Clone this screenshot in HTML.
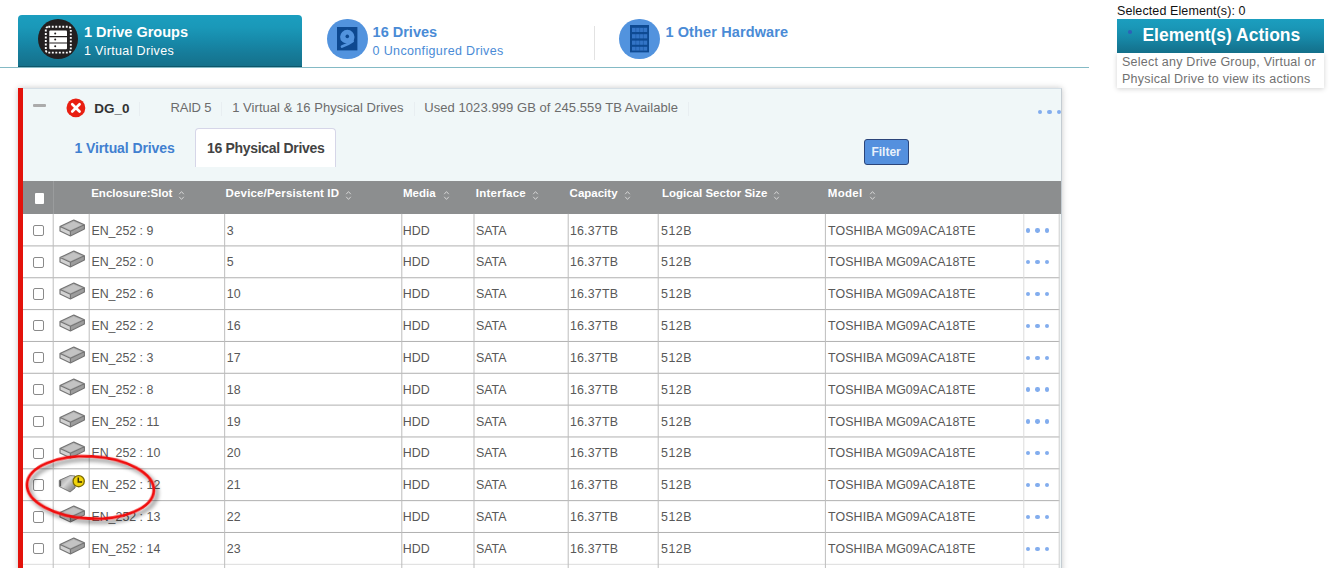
<!DOCTYPE html>
<html><head><meta charset="utf-8"><title>Drive Groups</title>
<style>
*{box-sizing:border-box;margin:0;padding:0}
html,body{width:1341px;height:568px;overflow:hidden;background:#fff;font-family:"Liberation Sans",sans-serif;}
body{position:relative}
.abs{position:absolute}
/* top tabs */
#tab1{left:18px;top:15.4px;width:284.3px;height:51.4px;border-radius:4px 4px 0 0;background:linear-gradient(#1b9ebf 0%,#1a98b8 25%,#178aaa 50%,#167c9a 75%,#15718b 100%);border-bottom:1.5px solid #0e566a}
.circ{width:40.6px;height:40.6px;border-radius:50%}
#c1{left:37.5px;top:18.5px;background:#231f20}
#c2{left:327px;top:18.5px;background:#5293de}
#c3{left:619.4px;top:18.5px;background:#5293de}
.t1{font-weight:bold;font-size:14.5px;line-height:16px;white-space:nowrap}
.t2{font-size:12.5px;line-height:14px;white-space:nowrap;letter-spacing:.35px}
.blue{color:#4a8bd6}
#hline{left:0;top:66.5px;width:1089px;height:1.6px;background:#84bac5}
#vsep{left:594px;top:26px;width:1px;height:34px;background:#e2e2e2}
/* right */
#sel{left:1117px;top:4px;font-size:12.5px;letter-spacing:.1px;line-height:14px;color:#111;white-space:nowrap}
#acth{left:1117px;top:19px;width:206.5px;height:34.4px;background:linear-gradient(#1b9ebf 0%,#1a97b7 25%,#1789a8 55%,#157a97 80%,#13708a 100%);color:#fff;font-weight:bold;font-size:17.5px;line-height:34px;white-space:nowrap}
#actb{left:1117px;top:53.4px;width:206.5px;height:34.2px;background:#fff;box-shadow:0 1px 5px rgba(0,0,0,.18);font-size:12.5px;letter-spacing:.23px;line-height:17.4px;color:#717171;padding:.6px 0 0 5px;white-space:nowrap}
/* panel */
#panel{left:18px;top:88px;width:1043.6px;height:500px;background:#f0f7f8;border-top:1px solid #d5dfe6;border-right:1.4px solid #c4ccd2;box-shadow:0 0 6px rgba(0,0,0,.22)}
#redbar{left:18px;top:88px;width:5px;height:500px;background:#e3120b}
.hd{font-size:13px;line-height:16px;white-space:nowrap;color:#6c6c6c}
.sepv{width:1px;height:14px;background:#e8eef1;top:101.6px}
#vt{letter-spacing:-.1px;left:74.5px;top:140px;font-size:14px;font-weight:bold;color:#4180d0;white-space:nowrap;line-height:17px}
#pt{letter-spacing:-.3px;left:195.3px;top:128.2px;width:140.8px;height:38.5px;background:#fff;border:1.4px solid #d6d6e8;border-bottom:none;border-radius:4px 4px 0 0;font-size:14px;font-weight:bold;color:#434343;line-height:17px;padding:10.4px 0 0 10.6px;white-space:nowrap}
#filter{left:863.6px;top:138.8px;width:45px;height:26.4px;background:#5490de;border:1px solid #2b457a;border-radius:3px;color:#e9f1fb;font-size:12px;font-weight:bold;line-height:24px;text-align:center}
/* table */
#thead{left:23px;top:181px;width:1037.6px;height:32.8px;background:#8c8e8f}
.th{position:absolute;top:5px;color:#fff;font-weight:bold;font-size:11.5px;line-height:14px;white-space:nowrap}
.srt{position:absolute;top:9px;line-height:0}
.srt svg{display:block}
#hcb{left:34.5px;top:193px;width:9.3px;height:10.5px;background:#fff;border-radius:1px}
#hsep{left:53px;top:181px;width:1px;height:32.6px;background:#9a9c9d}
#tbody{left:23px;top:0;width:1036.4px;height:568px;}
#tbg{left:23px;top:213.6px;width:1036.4px;height:360px;background:#fff}
.row{position:absolute;left:23px;width:1036.4px;height:31.84px;font-size:12.4px;color:#585858;}
.c{position:absolute;top:0;height:100%;border-left:1px solid transparent;line-height:32.6px;white-space:nowrap;padding-left:1.4px;overflow:hidden}
.c0{left:0;width:30px;border-left:none}
.c1{left:30px;width:36px}
.c2{left:66px;width:135.4px}
.c3{left:201.4px;width:177.4px}
.c4{left:378.3px;width:72.9px;padding-left:.5px}
.c5{left:451.2px;width:94.2px;padding-left:.8px}
.c6{left:545.4px;width:90.2px;padding-left:.5px;letter-spacing:.2px}
.c7{left:634.9px;width:167.5px;padding-left:2px;letter-spacing:.6px}
.c8{left:802.4px;width:198.4px;padding-left:1.7px;letter-spacing:.09px}
.c9{left:1000.8px;width:35.6px}
.cb{position:absolute;left:10.2px;top:10.2px;width:11.2px;height:11.2px;border:1px solid #8a8a8a;border-radius:2px;background:#fff}
.drv{position:absolute;left:3.8px;top:4px}
.dots{position:absolute;left:1.4px;top:13.7px;width:24px;height:5px}
.dots i{position:absolute;top:0;width:4.3px;height:4.3px;border-radius:50%;background:#82adee}
.dots i:nth-child(1){left:0}.dots i:nth-child(2){left:9.3px}.dots i:nth-child(3){left:18.6px}
#wrap{position:absolute;left:-20px;top:-20px;width:1381px;height:608px;background:#fff}
#in{position:absolute;left:20px;top:20px;width:1341px;height:568px}
</style></head><body><div id="wrap"><div id="in">
<div class="abs" id="hline"></div>
<div class="abs" id="tab1"></div>
<div class="abs circ" id="c1"></div>
<svg class="abs" style="left:44px;top:24.6px" width="28" height="29" viewBox="0 0 28 29"><rect x="1.8" y="1.8" width="25" height="25.8" rx="2.5" fill="none" stroke="#fff" stroke-width="1.9" stroke-dasharray="1.9 1.6"/><rect x="5.3" y="5.5" width="17.7" height="18.8" rx="1" fill="#fff"/><path d="M5.3 11.7 H23 M5.3 18 H23" stroke="#231f20" stroke-width="1.2"/><circle cx="11.2" cy="8.4" r="1" fill="#231f20"/><circle cx="11.2" cy="14.6" r="1" fill="#231f20"/><circle cx="11.2" cy="21.2" r="1" fill="#231f20"/></svg>
<div class="abs t1" style="left:84px;top:24px;color:#fff">1 Drive Groups</div>
<div class="abs t2" style="left:84px;top:43.9px;color:#fff">1 Virtual Drives</div>

<div class="abs circ" id="c2"></div>
<svg class="abs" style="left:337.2px;top:27.4px" width="20.4" height="23.4" viewBox="0 0 20.4 23.4"><rect width="20.4" height="23.4" fill="#0d4890"/><circle cx="10.3" cy="10" r="7.2" fill="#5293de"/><path d="M3.6 14.2 Q8 18.4 12.6 16.2" fill="none" stroke="#0d4890" stroke-width="1.5"/><path d="M15.6 14.2 Q11 17.6 5 19.6" fill="none" stroke="#5293de" stroke-width="2.7" stroke-linecap="round"/><circle cx="10.3" cy="9.4" r="1.8" fill="#0d4890"/></svg>
<div class="abs t1 blue" style="left:372.6px;top:24px">16 Drives</div>
<div class="abs t2 blue" style="left:372.6px;top:43.9px">0 Unconfigured Drives</div>
<div class="abs" id="vsep"></div>
<div class="abs circ" id="c3"></div>
<svg class="abs" style="left:630.2px;top:25.4px" width="19.2" height="27.4" viewBox="0 0 19.2 27.4"><rect width="19.2" height="27.4" fill="#0e4a92"/><g fill="#3374c6"><rect x="2" y="2.8" width="15.2" height="4.2"/><rect x="2" y="9.2" width="15.2" height="4.2"/><rect x="2" y="15.6" width="15.2" height="4.2"/><rect x="2" y="21.8" width="15.2" height="3.8"/></g><path d="M5.8 2.8V25.6M9.6 2.8V25.6M13.4 2.8V25.6" stroke="#0e4a92" stroke-width=".7" opacity=".6"/></svg>
<div class="abs t1 blue" style="left:665.4px;top:24px;letter-spacing:.12px">1 Other Hardware</div>

<div class="abs" id="sel">Selected Element(s): 0</div>
<div class="abs" id="actb">Select any Drive Group, Virtual or<br>Physical Drive to view its actions</div>
<div class="abs" id="acth"><span class="abs" style="left:11px;top:11.4px;width:3.6px;height:3.6px;border-radius:50%;background:#2d62b8"></span><span class="abs" style="left:25.4px;top:-1px">Element(s) Actions</span></div>

<div class="abs" id="panel"></div>
<div class="abs" id="redbar"></div>
<div class="abs" style="left:33px;top:104px;width:13px;height:2.6px;background:#ababab;border-radius:1px"></div>
<svg class="abs" style="left:65.8px;top:98.1px" width="19.8" height="19.8" viewBox="0 0 20 20"><circle cx="10" cy="10" r="9.5" fill="#e81f12"/><path d="M6.3 6.3 L13.7 13.7 M13.7 6.3 L6.3 13.7" stroke="#fff" stroke-width="2.7" stroke-linecap="round"/></svg>
<div class="abs hd" style="left:94.2px;top:101px;font-weight:bold;color:#333;font-size:13.5px">DG_0</div>
<div class="abs sepv" style="left:139.4px"></div>
<div class="abs hd" style="left:170.4px;top:100.3px;letter-spacing:-.15px">RAID 5</div>
<div class="abs sepv" style="left:220.6px"></div>
<div class="abs hd" style="left:232.2px;top:100.3px;letter-spacing:.04px">1 Virtual &amp; 16 Physical Drives</div>
<div class="abs sepv" style="left:413.6px"></div>
<div class="abs hd" style="left:424.2px;top:100.3px;letter-spacing:.07px">Used 1023.999 GB of 245.559 TB Available</div>
<div class="abs sepv" style="left:688px"></div>
<b class="dots abs" style="left:1038px;top:109.6px;width:23.4px;overflow:hidden"><i></i><i></i><i></i></b>
<div class="abs" id="vt">1 Virtual Drives</div>
<div class="abs" id="pt">16 Physical Drives</div>
<div class="abs" id="filter">Filter</div>

<div class="abs" id="tbg"></div>
<div class="abs" id="thead">
<span class="th" style="left:68.2px">Enclosure:Slot</span><span class="srt" style="left:154.9px"><svg viewBox="0 0 7 11" width="7" height="11"><path d="M1.2 4.2 L3.5 1.6 L5.8 4.2 M1.2 6.8 L3.5 9.4 L5.8 6.8" fill="none" stroke="#d4d4d4" stroke-width="1"/></svg></span>
<span class="th" style="left:202.6px;letter-spacing:.15px">Device/Persistent ID</span><span class="srt" style="left:322.4px"><svg viewBox="0 0 7 11" width="7" height="11"><path d="M1.2 4.2 L3.5 1.6 L5.8 4.2 M1.2 6.8 L3.5 9.4 L5.8 6.8" fill="none" stroke="#d4d4d4" stroke-width="1"/></svg></span>
<span class="th" style="left:380px">Media</span><span class="srt" style="left:420.0px"><svg viewBox="0 0 7 11" width="7" height="11"><path d="M1.2 4.2 L3.5 1.6 L5.8 4.2 M1.2 6.8 L3.5 9.4 L5.8 6.8" fill="none" stroke="#d4d4d4" stroke-width="1"/></svg></span>
<span class="th" style="left:452.8px;letter-spacing:.25px">Interface</span><span class="srt" style="left:508.8px"><svg viewBox="0 0 7 11" width="7" height="11"><path d="M1.2 4.2 L3.5 1.6 L5.8 4.2 M1.2 6.8 L3.5 9.4 L5.8 6.8" fill="none" stroke="#d4d4d4" stroke-width="1"/></svg></span>
<span class="th" style="left:546.6px">Capacity</span><span class="srt" style="left:601.2px"><svg viewBox="0 0 7 11" width="7" height="11"><path d="M1.2 4.2 L3.5 1.6 L5.8 4.2 M1.2 6.8 L3.5 9.4 L5.8 6.8" fill="none" stroke="#d4d4d4" stroke-width="1"/></svg></span>
<span class="th" style="left:639px">Logical Sector Size</span><span class="srt" style="left:749.7px"><svg viewBox="0 0 7 11" width="7" height="11"><path d="M1.2 4.2 L3.5 1.6 L5.8 4.2 M1.2 6.8 L3.5 9.4 L5.8 6.8" fill="none" stroke="#d4d4d4" stroke-width="1"/></svg></span>
<span class="th" style="left:804.8px;letter-spacing:.3px">Model</span><span class="srt" style="left:845.5px"><svg viewBox="0 0 7 11" width="7" height="11"><path d="M1.2 4.2 L3.5 1.6 L5.8 4.2 M1.2 6.8 L3.5 9.4 L5.8 6.8" fill="none" stroke="#d4d4d4" stroke-width="1"/></svg></span>
</div>
<div class="abs" id="hsep"></div>
<div class="abs" id="hcb"></div>
<svg class="abs" style="left:0;top:0" width="1341" height="568" viewBox="0 0 1341 568"><path d="M23 245.92H1059.6" stroke="#b0b0b0" stroke-width="1"/><path d="M23 277.76H1059.6" stroke="#b0b0b0" stroke-width="1"/><path d="M23 309.60H1059.6" stroke="#b0b0b0" stroke-width="1"/><path d="M23 341.44H1059.6" stroke="#b0b0b0" stroke-width="1"/><path d="M23 373.28H1059.6" stroke="#b0b0b0" stroke-width="1"/><path d="M23 405.12H1059.6" stroke="#b0b0b0" stroke-width="1"/><path d="M23 436.96H1059.6" stroke="#b0b0b0" stroke-width="1"/><path d="M23 468.80H1059.6" stroke="#b0b0b0" stroke-width="1"/><path d="M23 500.64H1059.6" stroke="#b0b0b0" stroke-width="1"/><path d="M23 532.48H1059.6" stroke="#b0b0b0" stroke-width="1"/><path d="M23 564.32H1059.6" stroke="#dcdcdc" stroke-width="1"/><path d="M53.20 213.8V568" stroke="#bdbdbd" stroke-width="1"/><path d="M89.20 213.8V568" stroke="#bdbdbd" stroke-width="1"/><path d="M224.66 213.8V568" stroke="#bdbdbd" stroke-width="1"/><path d="M401.80 213.8V568" stroke="#bdbdbd" stroke-width="1"/><path d="M474.00 213.8V568" stroke="#bdbdbd" stroke-width="1"/><path d="M568.20 213.8V568" stroke="#bdbdbd" stroke-width="1"/><path d="M658.20 213.8V568" stroke="#bdbdbd" stroke-width="1"/><path d="M825.40 213.8V568" stroke="#bdbdbd" stroke-width="1"/><path d="M1023.8 213.8V568" stroke="#dcdcdc" stroke-width="1"/><path d="M1059.2 213.8V568" stroke="#cfcfcf" stroke-width="1"/></svg>
<div class="row" style="top:214.58px"><span class="c c0"><i class="cb"></i></span><span class="c c1"><svg class="drv" viewBox="0 0 28 20" width="28" height="20"><polygon points="2,7.6 12.4,12.3 12.4,17 2,12.1" fill="#d2d2d2"/><polygon points="12.4,12.3 26.4,5.7 26.4,10.1 12.4,17" fill="#9c9c9c"/><polygon points="2,7.6 15.8,1.1 26.4,5.7 12.4,12.3" fill="#b4b4b4"/><polygon points="5.4,7.5 15.7,2.7 23.2,5.9 12.5,10.9" fill="#c3c3c3"/><path d="M2 7.6 L15.8 1.1 L26.4 5.7 V10.1 L12.4 17 L2 12.1 Z M2 7.6 L12.4 12.3 L26.4 5.7 M12.4 12.3 V17" fill="none" stroke="#747474" stroke-width="1.15" stroke-linejoin="round"/></svg></span><span class="c c2">EN_252 : 9</span><span class="c c3">3</span><span class="c c4">HDD</span><span class="c c5">SATA</span><span class="c c6">16.37TB</span><span class="c c7">512B</span><span class="c c8">TOSHIBA MG09ACA18TE</span><span class="c c9"><b class="dots"><i></i><i></i><i></i></b></span></div>
<div class="row" style="top:246.42px"><span class="c c0"><i class="cb"></i></span><span class="c c1"><svg class="drv" viewBox="0 0 28 20" width="28" height="20"><polygon points="2,7.6 12.4,12.3 12.4,17 2,12.1" fill="#d2d2d2"/><polygon points="12.4,12.3 26.4,5.7 26.4,10.1 12.4,17" fill="#9c9c9c"/><polygon points="2,7.6 15.8,1.1 26.4,5.7 12.4,12.3" fill="#b4b4b4"/><polygon points="5.4,7.5 15.7,2.7 23.2,5.9 12.5,10.9" fill="#c3c3c3"/><path d="M2 7.6 L15.8 1.1 L26.4 5.7 V10.1 L12.4 17 L2 12.1 Z M2 7.6 L12.4 12.3 L26.4 5.7 M12.4 12.3 V17" fill="none" stroke="#747474" stroke-width="1.15" stroke-linejoin="round"/></svg></span><span class="c c2">EN_252 : 0</span><span class="c c3">5</span><span class="c c4">HDD</span><span class="c c5">SATA</span><span class="c c6">16.37TB</span><span class="c c7">512B</span><span class="c c8">TOSHIBA MG09ACA18TE</span><span class="c c9"><b class="dots"><i></i><i></i><i></i></b></span></div>
<div class="row" style="top:278.26px"><span class="c c0"><i class="cb"></i></span><span class="c c1"><svg class="drv" viewBox="0 0 28 20" width="28" height="20"><polygon points="2,7.6 12.4,12.3 12.4,17 2,12.1" fill="#d2d2d2"/><polygon points="12.4,12.3 26.4,5.7 26.4,10.1 12.4,17" fill="#9c9c9c"/><polygon points="2,7.6 15.8,1.1 26.4,5.7 12.4,12.3" fill="#b4b4b4"/><polygon points="5.4,7.5 15.7,2.7 23.2,5.9 12.5,10.9" fill="#c3c3c3"/><path d="M2 7.6 L15.8 1.1 L26.4 5.7 V10.1 L12.4 17 L2 12.1 Z M2 7.6 L12.4 12.3 L26.4 5.7 M12.4 12.3 V17" fill="none" stroke="#747474" stroke-width="1.15" stroke-linejoin="round"/></svg></span><span class="c c2">EN_252 : 6</span><span class="c c3">10</span><span class="c c4">HDD</span><span class="c c5">SATA</span><span class="c c6">16.37TB</span><span class="c c7">512B</span><span class="c c8">TOSHIBA MG09ACA18TE</span><span class="c c9"><b class="dots"><i></i><i></i><i></i></b></span></div>
<div class="row" style="top:310.10px"><span class="c c0"><i class="cb"></i></span><span class="c c1"><svg class="drv" viewBox="0 0 28 20" width="28" height="20"><polygon points="2,7.6 12.4,12.3 12.4,17 2,12.1" fill="#d2d2d2"/><polygon points="12.4,12.3 26.4,5.7 26.4,10.1 12.4,17" fill="#9c9c9c"/><polygon points="2,7.6 15.8,1.1 26.4,5.7 12.4,12.3" fill="#b4b4b4"/><polygon points="5.4,7.5 15.7,2.7 23.2,5.9 12.5,10.9" fill="#c3c3c3"/><path d="M2 7.6 L15.8 1.1 L26.4 5.7 V10.1 L12.4 17 L2 12.1 Z M2 7.6 L12.4 12.3 L26.4 5.7 M12.4 12.3 V17" fill="none" stroke="#747474" stroke-width="1.15" stroke-linejoin="round"/></svg></span><span class="c c2">EN_252 : 2</span><span class="c c3">16</span><span class="c c4">HDD</span><span class="c c5">SATA</span><span class="c c6">16.37TB</span><span class="c c7">512B</span><span class="c c8">TOSHIBA MG09ACA18TE</span><span class="c c9"><b class="dots"><i></i><i></i><i></i></b></span></div>
<div class="row" style="top:341.94px"><span class="c c0"><i class="cb"></i></span><span class="c c1"><svg class="drv" viewBox="0 0 28 20" width="28" height="20"><polygon points="2,7.6 12.4,12.3 12.4,17 2,12.1" fill="#d2d2d2"/><polygon points="12.4,12.3 26.4,5.7 26.4,10.1 12.4,17" fill="#9c9c9c"/><polygon points="2,7.6 15.8,1.1 26.4,5.7 12.4,12.3" fill="#b4b4b4"/><polygon points="5.4,7.5 15.7,2.7 23.2,5.9 12.5,10.9" fill="#c3c3c3"/><path d="M2 7.6 L15.8 1.1 L26.4 5.7 V10.1 L12.4 17 L2 12.1 Z M2 7.6 L12.4 12.3 L26.4 5.7 M12.4 12.3 V17" fill="none" stroke="#747474" stroke-width="1.15" stroke-linejoin="round"/></svg></span><span class="c c2">EN_252 : 3</span><span class="c c3">17</span><span class="c c4">HDD</span><span class="c c5">SATA</span><span class="c c6">16.37TB</span><span class="c c7">512B</span><span class="c c8">TOSHIBA MG09ACA18TE</span><span class="c c9"><b class="dots"><i></i><i></i><i></i></b></span></div>
<div class="row" style="top:373.78px"><span class="c c0"><i class="cb"></i></span><span class="c c1"><svg class="drv" viewBox="0 0 28 20" width="28" height="20"><polygon points="2,7.6 12.4,12.3 12.4,17 2,12.1" fill="#d2d2d2"/><polygon points="12.4,12.3 26.4,5.7 26.4,10.1 12.4,17" fill="#9c9c9c"/><polygon points="2,7.6 15.8,1.1 26.4,5.7 12.4,12.3" fill="#b4b4b4"/><polygon points="5.4,7.5 15.7,2.7 23.2,5.9 12.5,10.9" fill="#c3c3c3"/><path d="M2 7.6 L15.8 1.1 L26.4 5.7 V10.1 L12.4 17 L2 12.1 Z M2 7.6 L12.4 12.3 L26.4 5.7 M12.4 12.3 V17" fill="none" stroke="#747474" stroke-width="1.15" stroke-linejoin="round"/></svg></span><span class="c c2">EN_252 : 8</span><span class="c c3">18</span><span class="c c4">HDD</span><span class="c c5">SATA</span><span class="c c6">16.37TB</span><span class="c c7">512B</span><span class="c c8">TOSHIBA MG09ACA18TE</span><span class="c c9"><b class="dots"><i></i><i></i><i></i></b></span></div>
<div class="row" style="top:405.62px"><span class="c c0"><i class="cb"></i></span><span class="c c1"><svg class="drv" viewBox="0 0 28 20" width="28" height="20"><polygon points="2,7.6 12.4,12.3 12.4,17 2,12.1" fill="#d2d2d2"/><polygon points="12.4,12.3 26.4,5.7 26.4,10.1 12.4,17" fill="#9c9c9c"/><polygon points="2,7.6 15.8,1.1 26.4,5.7 12.4,12.3" fill="#b4b4b4"/><polygon points="5.4,7.5 15.7,2.7 23.2,5.9 12.5,10.9" fill="#c3c3c3"/><path d="M2 7.6 L15.8 1.1 L26.4 5.7 V10.1 L12.4 17 L2 12.1 Z M2 7.6 L12.4 12.3 L26.4 5.7 M12.4 12.3 V17" fill="none" stroke="#747474" stroke-width="1.15" stroke-linejoin="round"/></svg></span><span class="c c2">EN_252 : 11</span><span class="c c3">19</span><span class="c c4">HDD</span><span class="c c5">SATA</span><span class="c c6">16.37TB</span><span class="c c7">512B</span><span class="c c8">TOSHIBA MG09ACA18TE</span><span class="c c9"><b class="dots"><i></i><i></i><i></i></b></span></div>
<div class="row" style="top:437.46px"><span class="c c0"><i class="cb"></i></span><span class="c c1"><svg class="drv" viewBox="0 0 28 20" width="28" height="20"><polygon points="2,7.6 12.4,12.3 12.4,17 2,12.1" fill="#d2d2d2"/><polygon points="12.4,12.3 26.4,5.7 26.4,10.1 12.4,17" fill="#9c9c9c"/><polygon points="2,7.6 15.8,1.1 26.4,5.7 12.4,12.3" fill="#b4b4b4"/><polygon points="5.4,7.5 15.7,2.7 23.2,5.9 12.5,10.9" fill="#c3c3c3"/><path d="M2 7.6 L15.8 1.1 L26.4 5.7 V10.1 L12.4 17 L2 12.1 Z M2 7.6 L12.4 12.3 L26.4 5.7 M12.4 12.3 V17" fill="none" stroke="#747474" stroke-width="1.15" stroke-linejoin="round"/></svg></span><span class="c c2">EN_252 : 10</span><span class="c c3">20</span><span class="c c4">HDD</span><span class="c c5">SATA</span><span class="c c6">16.37TB</span><span class="c c7">512B</span><span class="c c8">TOSHIBA MG09ACA18TE</span><span class="c c9"><b class="dots"><i></i><i></i><i></i></b></span></div>
<div class="row" style="top:469.30px"><span class="c c0"><i class="cb"></i></span><span class="c c1"><svg class="drv" viewBox="0 0 28 20" width="28" height="20"><defs><linearGradient id="dg" x1="0" y1="0" x2="1" y2="1"><stop offset="0" stop-color="#8a8a8a"/><stop offset=".45" stop-color="#d6d6d6"/><stop offset="1" stop-color="#6e6e6e"/></linearGradient></defs><g transform="translate(0.1,0.95)"><polygon points="1.2,6.4 12,1.6 17,2 17,14 12,18 1.2,12.6" fill="url(#dg)" stroke="#666" stroke-width=".8" stroke-linejoin="round"/><polygon points="1.6,6.8 3,6.4 3,12.6 1.6,12" fill="#555"/><circle cx="20.6" cy="7.2" r="5.6" fill="#f2d40a" stroke="#7a6a00" stroke-width="1.3"/><path d="M20.2 3.6 V8 H24" fill="none" stroke="#3a3200" stroke-width="1.5"/></g></svg></span><span class="c c2">EN_252 : 12</span><span class="c c3">21</span><span class="c c4">HDD</span><span class="c c5">SATA</span><span class="c c6">16.37TB</span><span class="c c7">512B</span><span class="c c8">TOSHIBA MG09ACA18TE</span><span class="c c9"><b class="dots"><i></i><i></i><i></i></b></span></div>
<div class="row" style="top:501.14px"><span class="c c0"><i class="cb"></i></span><span class="c c1"><svg class="drv" viewBox="0 0 28 20" width="28" height="20"><polygon points="2,7.6 12.4,12.3 12.4,17 2,12.1" fill="#d2d2d2"/><polygon points="12.4,12.3 26.4,5.7 26.4,10.1 12.4,17" fill="#9c9c9c"/><polygon points="2,7.6 15.8,1.1 26.4,5.7 12.4,12.3" fill="#b4b4b4"/><polygon points="5.4,7.5 15.7,2.7 23.2,5.9 12.5,10.9" fill="#c3c3c3"/><path d="M2 7.6 L15.8 1.1 L26.4 5.7 V10.1 L12.4 17 L2 12.1 Z M2 7.6 L12.4 12.3 L26.4 5.7 M12.4 12.3 V17" fill="none" stroke="#747474" stroke-width="1.15" stroke-linejoin="round"/></svg></span><span class="c c2">EN_252 : 13</span><span class="c c3">22</span><span class="c c4">HDD</span><span class="c c5">SATA</span><span class="c c6">16.37TB</span><span class="c c7">512B</span><span class="c c8">TOSHIBA MG09ACA18TE</span><span class="c c9"><b class="dots"><i></i><i></i><i></i></b></span></div>
<div class="row" style="top:532.98px"><span class="c c0"><i class="cb"></i></span><span class="c c1"><svg class="drv" viewBox="0 0 28 20" width="28" height="20"><polygon points="2,7.6 12.4,12.3 12.4,17 2,12.1" fill="#d2d2d2"/><polygon points="12.4,12.3 26.4,5.7 26.4,10.1 12.4,17" fill="#9c9c9c"/><polygon points="2,7.6 15.8,1.1 26.4,5.7 12.4,12.3" fill="#b4b4b4"/><polygon points="5.4,7.5 15.7,2.7 23.2,5.9 12.5,10.9" fill="#c3c3c3"/><path d="M2 7.6 L15.8 1.1 L26.4 5.7 V10.1 L12.4 17 L2 12.1 Z M2 7.6 L12.4 12.3 L26.4 5.7 M12.4 12.3 V17" fill="none" stroke="#747474" stroke-width="1.15" stroke-linejoin="round"/></svg></span><span class="c c2">EN_252 : 14</span><span class="c c3">23</span><span class="c c4">HDD</span><span class="c c5">SATA</span><span class="c c6">16.37TB</span><span class="c c7">512B</span><span class="c c8">TOSHIBA MG09ACA18TE</span><span class="c c9"><b class="dots"><i></i><i></i><i></i></b></span></div>
<div class="row" style="top:564.82px"><span class="c c0"><i class="cb"></i></span><span class="c c1"><svg class="drv" viewBox="0 0 28 20" width="28" height="20"><polygon points="2,7.6 12.4,12.3 12.4,17 2,12.1" fill="#d2d2d2"/><polygon points="12.4,12.3 26.4,5.7 26.4,10.1 12.4,17" fill="#9c9c9c"/><polygon points="2,7.6 15.8,1.1 26.4,5.7 12.4,12.3" fill="#b4b4b4"/><polygon points="5.4,7.5 15.7,2.7 23.2,5.9 12.5,10.9" fill="#c3c3c3"/><path d="M2 7.6 L15.8 1.1 L26.4 5.7 V10.1 L12.4 17 L2 12.1 Z M2 7.6 L12.4 12.3 L26.4 5.7 M12.4 12.3 V17" fill="none" stroke="#747474" stroke-width="1.15" stroke-linejoin="round"/></svg></span><span class="c c2">EN_252 : 15</span><span class="c c3">24</span><span class="c c4">HDD</span><span class="c c5">SATA</span><span class="c c6">16.37TB</span><span class="c c7">512B</span><span class="c c8">TOSHIBA MG09ACA18TE</span><span class="c c9"><b class="dots"><i></i><i></i><i></i></b></span></div>
<svg class="abs" style="left:10px;top:440px;overflow:visible" width="170" height="100" viewBox="0 0 170 100"><defs><filter id="sh" x="-20%" y="-20%" width="150%" height="150%"><feGaussianBlur in="SourceAlpha" stdDeviation="2.1"/><feOffset dx="2.6" dy="2.6"/><feComponentTransfer><feFuncA type="linear" slope=".55"/></feComponentTransfer><feMerge><feMergeNode/><feMergeNode in="SourceGraphic"/></feMerge></filter></defs><ellipse cx="80.4" cy="47.4" rx="63.5" ry="31.1" fill="none" stroke="#f01010" stroke-width="2.8" filter="url(#sh)" transform="rotate(3 80.4 47.4)"/></svg>
</div></div></body></html>
